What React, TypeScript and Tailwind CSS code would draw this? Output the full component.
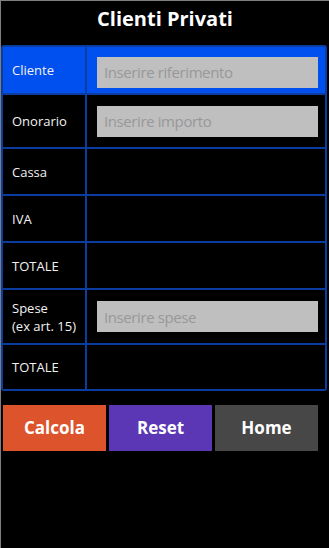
import React from "react";

const font = { fontFamily: '"Open Sans", "Noto Sans", sans-serif' };

function Label({ children }: { children: React.ReactNode }) {
  return <div className="flex items-center pl-[9px] text-[13px] leading-[18px] text-[#f2f2f2]">{children}</div>;
}

function Input({ placeholder }: { placeholder: string }) {
  return (
    <div className="flex items-center pl-[10px] pr-[7px]">
      <input
        className="w-full h-[31px] bg-[#bfbfbf] px-[7px] text-[15px] tracking-[-0.4px] text-[#333] placeholder:text-[#989898] outline-none"
        placeholder={placeholder}
      />
    </div>
  );
}

export default function App() {
  return (
    <div className="w-[329px] h-[548px] bg-black border-l border-t border-[#7f7f7f] overflow-hidden" style={font}>
      <div className="h-[44px] flex items-center justify-center pb-[8px] text-white font-bold text-[20px]">Clienti Privati</div>
      <div className="w-[326px] bg-[#0b3c9f] p-[2px] rounded-[3px] grid grid-cols-[82px_1fr] grid-rows-[46px_52px_45px_45px_45px_53px_44px] gap-[2px]">
        <div className="bg-[#0050ef] flex"><Label>Cliente</Label></div>
        <div className="bg-[#0050ef] flex items-center pl-[10px] pr-[7px] pt-[4px]">
          <input
            className="w-full h-[31px] bg-[#bfbfbf] px-[7px] text-[15px] tracking-[-0.4px] text-[#333] placeholder:text-[#989898] outline-none"
            placeholder="Inserire riferimento"
          />
        </div>
        <div className="bg-black flex"><Label>Onorario</Label></div>
        <div className="bg-black"><div className="h-full flex flex-col justify-center"><Input placeholder="Inserire importo" /></div></div>
        <div className="bg-black flex"><Label>Cassa</Label></div>
        <div className="bg-black" />
        <div className="bg-black flex"><Label>IVA</Label></div>
        <div className="bg-black" />
        <div className="bg-black flex"><Label>TOTALE</Label></div>
        <div className="bg-black" />
        <div className="bg-black flex"><Label>Spese<br />(ex art. 15)</Label></div>
        <div className="bg-black"><div className="h-full flex flex-col justify-center"><Input placeholder="Inserire spese" /></div></div>
        <div className="bg-black flex"><Label>TOTALE</Label></div>
        <div className="bg-black" />
      </div>
      <div className="mt-[14px] ml-[2px] flex gap-[3px]">
        <button className="w-[103px] h-[46px] bg-[#dc532c] text-white font-bold text-[17px]">Calcola</button>
        <button className="w-[103px] h-[46px] bg-[#5b37b6] text-white font-bold text-[17px]">Reset</button>
        <button className="w-[103px] h-[46px] bg-[#474747] text-white font-bold text-[17px]">Home</button>
      </div>
    </div>
  );
}
